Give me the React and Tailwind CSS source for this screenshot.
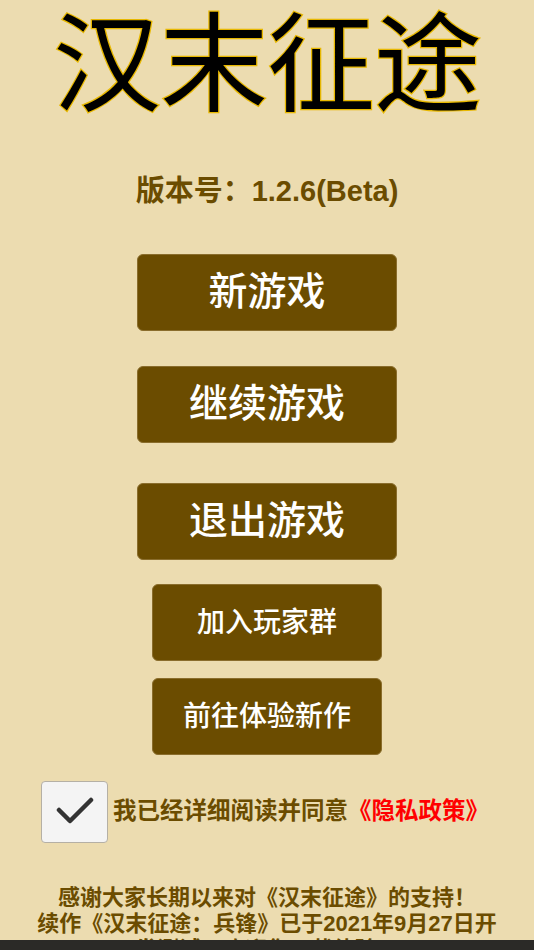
import { useState } from 'react';

const font = 'font-["Liberation_Sans","Noto_Sans_CJK_SC",sans-serif]';

function MenuButton({ label, big }) {
  return (
    <button
      className={`flex items-center justify-center rounded-md border border-[#8a6d2c] bg-[#6b4c00] font-medium text-white ${
        big ? 'w-[260px] h-[77px] text-[39px]' : 'w-[230px] h-[77px] text-[28px]'
      }`}
    >
      {label}
    </button>
  );
}

export default function App() {
  const [agreed, setAgreed] = useState(true);

  return (
    <div className={`relative h-[950px] w-[534px] overflow-hidden bg-[#ecdcb0] ${font}`}>
      {/* Title */}
      <h1 className="pt-[4px] text-center text-[108px] leading-[124px] font-normal tracking-[-1px] text-black [-webkit-text-stroke:2.5px_#e8b800] [paint-order:stroke_fill]">
        汉末征途
      </h1>

      <p className="mt-[46px] text-center text-[29px] leading-[34px] font-bold text-[#6b4c00]">
        版本号：1.2.6(Beta)
      </p>

      {/* Menu */}
      <div className="mt-[46px] flex flex-col items-center">
        <MenuButton label="新游戏" big />
        <div className="h-[35px]" />
        <MenuButton label="继续游戏" big />
        <div className="h-[40px]" />
        <MenuButton label="退出游戏" big />
        <div className="h-[24px]" />
        <MenuButton label="加入玩家群" />
        <div className="h-[17px]" />
        <MenuButton label="前往体验新作" />
      </div>

      {/* Privacy agreement */}
      <div className="mt-[26px] flex items-center pl-[41px]">
        <button
          onClick={() => setAgreed(!agreed)}
          className="flex h-[62px] w-[67px] items-center justify-center rounded-[4px] border border-[#b5b0a5] bg-[#f4f4f4]"
          aria-label="agree"
        >
          {agreed && (
            <svg width="40" height="30" viewBox="0 0 40 30">
              <path
                d="M4 13 L15 24 L36 3"
                fill="none"
                stroke="#333"
                strokeWidth="4.5"
                strokeLinecap="round"
                strokeLinejoin="round"
              />
            </svg>
          )}
        </button>
        <span className="ml-[5px] text-[23.5px] font-bold text-[#6b4c00]">
          我已经详细阅读并同意<span className="text-[#ff0000]">《隐私政策》</span>
        </span>
      </div>

      {/* Notice */}
      <p className="mt-[42px] px-[30px] text-center text-[22px] leading-[26px] font-bold text-[#6b4c00]">
        感谢大家长期以来对《汉末征途》的支持！
        <br />
        续作《汉末征途：兵锋》已于2021年9月27日开发测试，欢迎您下载体验！
      </p>

      {/* Bottom bar overlay */}
      <div className="absolute bottom-0 left-0 h-[10px] w-full bg-[#2b2a27]" />
    </div>
  );
}
